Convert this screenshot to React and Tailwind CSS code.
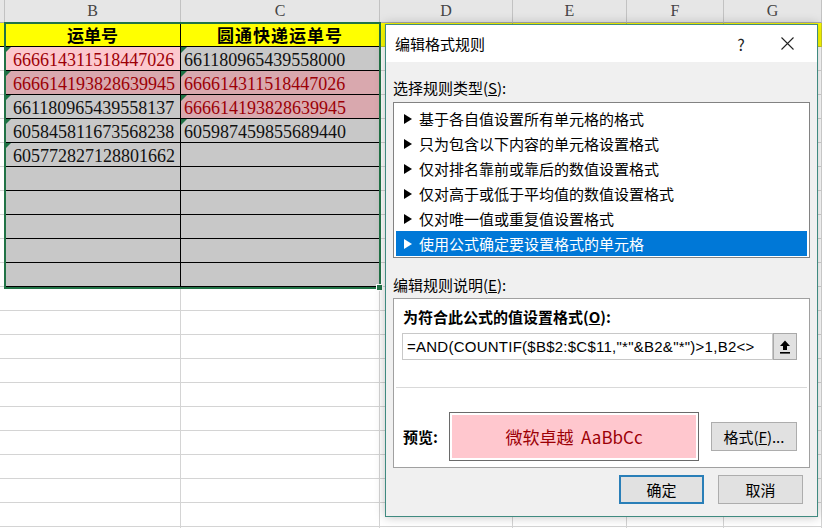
import React from 'react';

const colW = ['w-[5px]', 'w-[176px]', 'w-[199px]', 'w-[133px]', 'w-[114px]', 'w-[97px]', 'w-[98px]'];
const letters = ['', 'B', 'C', 'D', 'E', 'F', 'G'];

const GRAY = 'bg-[#c8c8c8]';
const PINK = 'bg-[#fcc8ce]';
const DPINK = 'bg-[#d9a8ae]';

const table = [
  null,
  { b: { t: '666614311518447026', bg: PINK, red: true }, c: { t: '661180965439558000', bg: GRAY } },
  { b: { t: '666614193828639945', bg: DPINK, red: true }, c: { t: '666614311518447026', bg: DPINK, red: true } },
  { b: { t: '661180965439558137', bg: GRAY }, c: { t: '666614193828639945', bg: DPINK, red: true } },
  { b: { t: '605845811673568238', bg: GRAY }, c: { t: '605987459855689440', bg: GRAY } },
  { b: { t: '605772827128801662', bg: GRAY }, c: { t: '', bg: GRAY } },
  { b: { t: '', bg: GRAY }, c: { t: '', bg: GRAY } },
  { b: { t: '', bg: GRAY }, c: { t: '', bg: GRAY } },
  { b: { t: '', bg: GRAY }, c: { t: '', bg: GRAY } },
  { b: { t: '', bg: GRAY }, c: { t: '', bg: GRAY } },
  { b: { t: '', bg: GRAY }, c: { t: '', bg: GRAY } },
];

function Tri() {
  return (
    <svg className="absolute left-0 top-0" width="6" height="6" viewBox="0 0 6 6">
      <polygon points="0,0 6,0 0,6" fill="#1e7145" />
    </svg>
  );
}

function DataCell({ w, cell, pad }) {
  return (
    <div className={`${w} ${cell.bg} relative h-full shrink-0 border-r border-b border-black flex items-center ${pad} overflow-hidden`}>
      {cell.t && <Tri />}
      <span className={`font-['Liberation_Serif',serif] text-[18px] leading-[22px] pt-[2px] whitespace-nowrap ${cell.red ? 'text-[#9c0006]' : 'text-[#111]'}`}>
        {cell.t}
      </span>
    </div>
  );
}

function Sheet() {
  const rows = [];
  for (let r = 0; r < 22; r++) {
    if (r === 0) {
      rows.push(
        <div key={r} className="flex h-[24px] shrink-0 bg-[#ffff00]">
          <div className={`${colW[0]} h-full shrink-0 border-b border-black`} />
          <div className={`${colW[1]} h-full shrink-0 border-r border-b border-black flex items-center justify-center`}>
            <span className="font-['Noto_Sans_CJK_SC',sans-serif] font-bold text-[17px] leading-[22px] text-black">运单号</span>
          </div>
          <div className={`${colW[2]} h-full shrink-0 border-r border-b border-black flex items-center justify-center`}>
            <span className="font-['Noto_Sans_CJK_SC',sans-serif] font-bold text-[17px] leading-[22px] text-black tracking-[1px]">圆通快递运单号</span>
          </div>
          {[3, 4, 5, 6].map((i) => (
            <div key={i} className={`${colW[i]} h-full shrink-0 border-r border-b border-[#c9c92a]`} />
          ))}
        </div>
      );
    } else if (r <= 10) {
      const d = table[r];
      rows.push(
        <div key={r} className="flex h-[24px] shrink-0 bg-white">
          <div className={`${colW[0]} h-full shrink-0 border-b border-[#d4d4d4]`} />
          <DataCell w={colW[1]} cell={d.b} pad="pl-[8px]" />
          <DataCell w={colW[2]} cell={d.c} pad="pl-[3px]" />
          {[3, 4, 5, 6].map((i) => (
            <div key={i} className={`${colW[i]} h-full shrink-0 border-r border-b border-[#d4d4d4]`} />
          ))}
        </div>
      );
    } else {
      rows.push(
        <div key={r} className="flex h-[24px] shrink-0 bg-white">
          {colW.map((w, i) => (
            <div key={i} className={`${w} h-full shrink-0 ${i === 0 ? '' : 'border-r'} border-b border-[#d4d4d4]`} />
          ))}
        </div>
      );
    }
  }
  return (
    <div className="flex flex-col">
      <div className="flex h-[23px] shrink-0 bg-[#e6e6e6]">
        {colW.map((w, i) => (
          <div
            key={i}
            className={`${w} h-full shrink-0 border-r border-b border-r-[#c2c2c2] border-b-[#ababab] flex items-center justify-center`}
          >
            <span className="font-['Liberation_Serif',serif] text-[16px] leading-[20px] text-[#444]">{letters[i]}</span>
          </div>
        ))}
      </div>
      {rows}
    </div>
  );
}

function Arrow({ white }) {
  return (
    <svg width="8" height="10" viewBox="0 0 8 10" className="shrink-0">
      <polygon points="0,0 8,5 0,10" fill={white ? '#ffffff' : '#000000'} />
    </svg>
  );
}

const items = [
  '基于各自值设置所有单元格的格式',
  '只为包含以下内容的单元格设置格式',
  '仅对排名靠前或靠后的数值设置格式',
  '仅对高于或低于平均值的数值设置格式',
  '仅对唯一值或重复值设置格式',
  '使用公式确定要设置格式的单元格',
];

function Dialog() {
  return (
    <div className="absolute left-[385px] top-[24px] w-[433px] h-[493px] border border-[#3f8a80] flex flex-col shadow-[0_0_10px_rgba(0,0,0,0.25)] font-['Noto_Sans_CJK_SC','Microsoft_YaHei',sans-serif] text-[15px] text-black">
      <div className="h-[37px] shrink-0 bg-white flex items-center pl-[9px]">
        <span className="leading-[20px]">编辑格式规则</span>
        <div className="ml-auto w-[46px] h-full flex items-center justify-center text-[16px] text-[#222]">?</div>
        <div className="w-[46px] h-full flex items-center justify-center mr-[7px]">
          <svg width="13" height="13" viewBox="0 0 13 13">
            <path d="M0.5 0.5 L12.5 12.5 M12.5 0.5 L0.5 12.5" stroke="#222" strokeWidth="1.1" />
          </svg>
        </div>
      </div>
      <div className="flex-1 bg-[#f0f0f0] px-[7px] flex flex-col">
        <div className="mt-[16px] h-[20px] leading-[20px]">
          选择规则类型(<span className="underline">S</span>):
        </div>
        <div className="mt-[4px] h-[156px] border border-[#828282] bg-white pt-[3px] px-[2px] flex flex-col">
          {items.map((t, i) => {
            const sel = i === items.length - 1;
            return (
              <div
                key={i}
                className={`h-[25px] flex items-center gap-[7px] pl-[8px] ${sel ? 'bg-[#0078d7] text-white' : ''}`}
              >
                <Arrow white={sel} />
                <span className="leading-[20px] whitespace-nowrap">{t}</span>
              </div>
            );
          })}
        </div>
        <div className="mt-[17px] h-[20px] leading-[20px]">
          编辑规则说明(<span className="underline">E</span>):
        </div>
        <div className="mt-[3px] h-[170px] border border-[#a0a0a0] bg-white px-[8px] flex flex-col">
          <div className="mt-[8px] h-[20px] leading-[20px] font-bold pl-[1px]">
            为符合此公式的值设置格式(<span className="underline">O</span>):
          </div>
          <div className="mt-[6px] h-[27px] flex">
            <div className="w-[371px] h-full border border-[#c8c8c8] bg-white flex items-center pl-[4px] overflow-hidden">
              <span className="font-['Liberation_Sans',sans-serif] text-[15px] leading-[20px] whitespace-nowrap tracking-[0.25px]">
                =AND(COUNTIF($B$2:$C$11,"*"&amp;B2&amp;"*")&gt;1,B2&lt;&gt;
              </span>
            </div>
            <div className="w-[24px] h-full border border-[#a9a9a9] bg-[#e1e1e1] flex items-center justify-center">
              <svg width="12" height="14" viewBox="0 0 12 14">
                <path d="M6 0.5 L11 6 H8 V10 H4 V6 H1 Z" fill="#000" />
                <rect x="1" y="12" width="10" height="1.6" fill="#000" />
              </svg>
            </div>
          </div>
          <div className="mt-[27px] h-px bg-[#d9d9d9] -mx-[6px]" />
          <div className="mt-[24px] flex items-center">
            <div className="w-[47px] pl-[1px] font-bold leading-[20px]">预览:</div>
            <div className="w-[250px] h-[49px] border border-[#6a6a6a] p-[2px] bg-white">
              <div className="w-full h-full bg-[#ffc7ce] flex items-center justify-center text-[#9c0006] text-[17px] leading-[20px]">
                微软卓越&nbsp;&nbsp;AaBbCc
              </div>
            </div>
            <div className="ml-[12px] w-[86px] h-[29px] border border-[#adadad] bg-[#e1e1e1] flex items-center justify-center leading-[20px]">
              格式(<span className="underline">F</span>)...
            </div>
          </div>
        </div>
        <div className="mt-[7px] flex justify-end gap-[14px] mr-[7px]">
          <div className="w-[85px] h-[29px] border-2 border-[#2a7fb8] bg-[#e1e1e1] flex items-center justify-center leading-[20px]">
            确定
          </div>
          <div className="w-[85px] h-[29px] border border-[#adadad] bg-[#e1e1e1] flex items-center justify-center leading-[20px]">
            取消
          </div>
        </div>
      </div>
    </div>
  );
}

export default function App() {
  return (
    <div className="relative w-[822px] h-[528px] overflow-hidden bg-white">
      <Sheet />
      <div className="absolute left-[4px] top-[22px] w-[377px] h-[267px] border-2 border-[#217346] pointer-events-none" />
      <div className="absolute left-[376px] top-[284px] w-[7px] h-[7px] bg-[#217346] border border-white" />
      <Dialog />
    </div>
  );
}
